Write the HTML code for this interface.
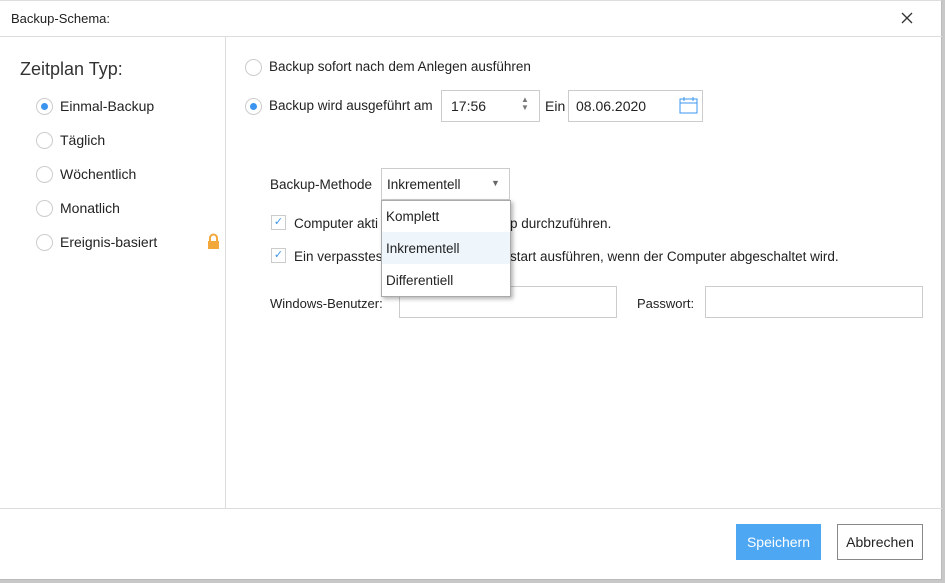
<!DOCTYPE html>
<html><head><meta charset="utf-8"><style>
*{box-sizing:border-box;margin:0;padding:0}
body{width:945px;height:583px;background:#c8c8c8;font-family:"Liberation Sans",sans-serif;color:#222;font-size:13px;position:relative;overflow:hidden}
.dlg{position:absolute;left:0;top:0;width:942px;height:580px;background:#fff;border:1px solid #bbb;border-left:none;border-top:1px solid #ddd}
.a{position:absolute;white-space:nowrap}
.rad{position:absolute;width:17px;height:17px;border:1px solid #ccc;border-radius:50%;background:#fff}
.rad.on::after{content:"";position:absolute;left:4px;top:4px;width:7px;height:7px;border-radius:50%;background:#3b95ee}
.box{position:absolute;border:1px solid #ccc;background:#fff}
.chk{position:absolute;width:15px;height:15px;border:1px solid #ccc;background:#fff;color:#3b95ee;font-size:11px;text-align:center;line-height:13px}
</style></head><body>
<div class="dlg">
<div class="a" style="left:11px;top:10px;font-size:13px">Backup-Schema:</div>
<svg class="a" style="left:901px;top:11px" width="12" height="12"><path d="M1 1L11 11M11 1L1 11" stroke="#333" stroke-width="1.3"/></svg>
<div style="position:absolute;left:0;top:35px;width:942px;height:1px;background:#ddd"></div>
<div style="position:absolute;left:225px;top:36px;width:1px;height:472px;background:#ddd"></div>
<div style="position:absolute;left:0;top:507px;width:942px;height:1px;background:#ddd"></div>

<div class="a" style="left:20px;top:58px;font-size:18px;color:#333">Zeitplan Typ:</div>
<div class="rad on" style="left:36px;top:97px"></div><div class="a" style="left:60px;top:97px;font-size:14px">Einmal-Backup</div>
<div class="rad" style="left:36px;top:131px"></div><div class="a" style="left:60px;top:131px;font-size:14px">Täglich</div>
<div class="rad" style="left:36px;top:165px"></div><div class="a" style="left:60px;top:165px;font-size:14px">Wöchentlich</div>
<div class="rad" style="left:36px;top:199px"></div><div class="a" style="left:60px;top:199px;font-size:14px">Monatlich</div>
<div class="rad" style="left:36px;top:233px"></div><div class="a" style="left:60px;top:233px;font-size:14px">Ereignis-basiert</div>
<svg class="a" style="left:207px;top:232px" width="13" height="17"><path d="M3 8V5a3.5 3.5 0 0 1 7 0v3" stroke="#f3a83b" stroke-width="2" fill="none"/><rect x="1" y="8" width="11" height="8" fill="#f3a83b"/></svg>

<div class="rad" style="left:245px;top:58px"></div><div class="a" style="left:269px;top:58px;font-size:13.5px">Backup sofort nach dem Anlegen ausführen</div>
<div class="rad on" style="left:245px;top:97px"></div><div class="a" style="left:269px;top:97px;font-size:13.5px">Backup wird ausgeführt am</div>
<div class="box" style="left:441px;top:89px;width:99px;height:32px"></div>
<div class="a" style="left:451px;top:97px;font-size:14px">17:56</div>
<div class="a" style="left:521px;top:95px;font-size:8px;color:#777;line-height:8px">▲<br>▼</div>
<div class="a" style="left:545px;top:97px;font-size:14px">Ein</div>
<div class="box" style="left:568px;top:89px;width:135px;height:32px"></div>
<div class="a" style="left:576px;top:97px;font-size:14px">08.06.2020</div>
<svg class="a" style="left:679px;top:95px" width="19" height="18"><rect x="1" y="3" width="17" height="14" fill="none" stroke="#3b95ee"/><line x1="1" y1="7" x2="18" y2="7" stroke="#3b95ee"/><line x1="5" y1="1" x2="5" y2="5" stroke="#3b95ee"/><line x1="14" y1="1" x2="14" y2="5" stroke="#3b95ee"/></svg>

<div class="a" style="left:270px;top:176px;font-size:13.5px">Backup-Methode</div>
<div class="box" style="left:381px;top:167px;width:129px;height:32px"></div>
<div class="a" style="left:387px;top:176px;font-size:13.5px">Inkrementell</div>
<div class="a" style="left:491px;top:177px;font-size:9px;color:#666">▼</div>

<div class="chk" style="left:271px;top:214px">✓</div><div class="a" style="left:294px;top:215px;font-size:13.5px">Computer akti</div><div class="a" style="left:510px;top:215px;font-size:13.5px">p durchzuführen.</div>
<div class="chk" style="left:271px;top:247px">✓</div><div class="a" style="left:294px;top:248px;font-size:13.5px">Ein verpasstes</div><div class="a" style="left:510px;top:248px;font-size:13.5px">start ausführen, wenn der Computer abgeschaltet wird.</div>

<div class="a" style="left:270px;top:295px">Windows-Benutzer:</div>
<div class="box" style="left:399px;top:285px;width:218px;height:32px"></div>
<div class="a" style="left:637px;top:295px">Passwort:</div>
<div class="box" style="left:705px;top:285px;width:218px;height:32px"></div>

<div class="box" style="left:381px;top:199px;width:130px;height:97px;border-color:#aaa;box-shadow:2px 2px 4px rgba(0,0,0,.3);z-index:5">
<div style="position:absolute;left:0;top:31px;width:128px;height:32px;background:#eef6fc"></div>
<div class="a" style="left:4px;top:8px;font-size:13.5px">Komplett</div>
<div class="a" style="left:4px;top:40px;font-size:13.5px">Inkrementell</div>
<div class="a" style="left:4px;top:72px;font-size:13.5px">Differentiell</div>
</div>

<div class="a" style="left:736px;top:523px;width:85px;height:36px;background:#4ea7f2;color:#fff;text-align:center;line-height:36px;font-size:14px">Speichern</div>
<div class="a" style="left:837px;top:523px;width:86px;height:36px;border:1px solid #888;text-align:center;line-height:34px;font-size:14px">Abbrechen</div>
</div>
</body></html>
